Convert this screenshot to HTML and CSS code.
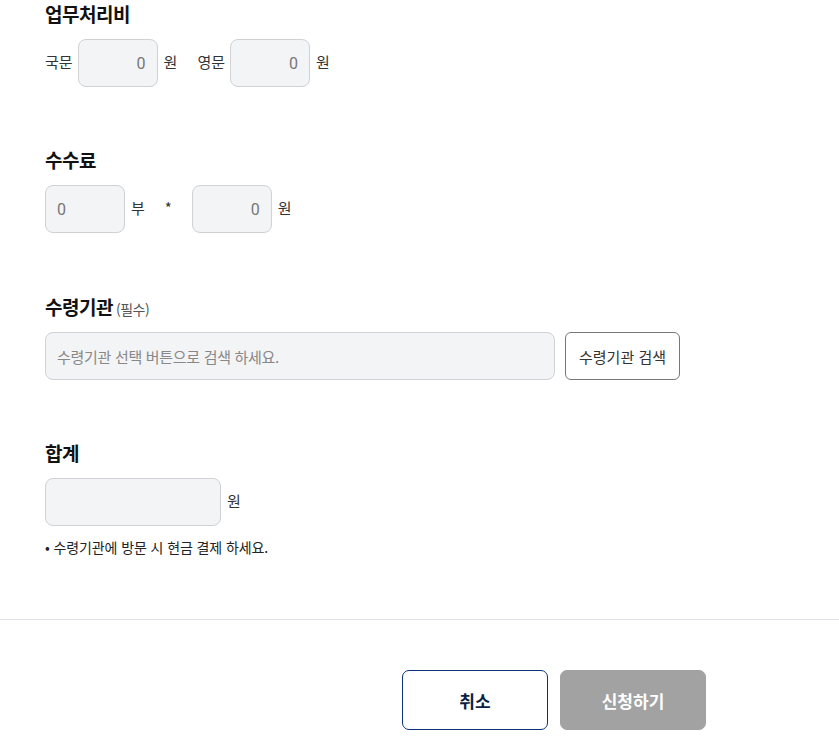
FILE: index.html
```html
<!DOCTYPE html>
<html lang="ko">
<head>
<meta charset="utf-8">
<link rel="stylesheet" href="styles.css">
</head>
<body>
<div class="form">
  <section class="sec">
    <h3 class="title">업무처리비</h3>
    <div class="row">
      <span class="lbl">국문</span>
      <input class="field right" value="0" readonly>
      <span class="unit">원</span>
      <span class="lbl grp">영문</span>
      <input class="field right" value="0" readonly>
      <span class="unit">원</span>
    </div>
  </section>

  <section class="sec">
    <h3 class="title">수수료</h3>
    <div class="row">
      <input class="field" value="0" readonly>
      <span class="unit">부</span>
      <span class="mult">*</span>
      <input class="field right" value="0" readonly>
      <span class="unit">원</span>
    </div>
  </section>

  <section class="sec third">
    <h3 class="title">수령기관<span class="req">(필수)</span></h3>
    <div class="row row-wide">
      <input class="field wide" placeholder="수령기관 선택 버튼으로 검색 하세요." readonly>
      <button class="search">수령기관 검색</button>
    </div>
  </section>

  <section class="sec last">
    <h3 class="title">합계</h3>
    <div class="row">
      <input class="field total" readonly>
      <span class="unit">원</span>
    </div>
    <p class="note">• 수령기관에 방문 시 현금 결제 하세요.</p>
  </section>
</div>
<div class="actions">
  <button class="btn cancel">취소</button>
  <button class="btn submit">신청하기</button>
</div>
</body>
</html>
```

FILE: styles.css
```css
* { box-sizing: border-box; }
html, body { margin: 0; padding: 0; background: #fff; }
body {
  font-family: "Noto Sans CJK KR", "Noto Sans", sans-serif;
  color: #222;
}
.form { padding-left: 45px; }
.sec { margin-bottom: 59px; }
.sec.third { padding-top: 1px; }
.sec.last { margin-bottom: 0; padding-bottom: 62px; }
.title {
  margin: 0 0 11px;
  height: 28px;
  font-size: 19px;
  line-height: 28px;
  font-weight: 700;
  color: #111;
  letter-spacing: -0.5px;
}
.req {
  margin-left: 3px;
  font-size: 14px;
  line-height: 1;
  font-weight: 400;
  color: #555;
  letter-spacing: -0.5px;
}
.row {
  display: flex;
  align-items: center;
  height: 48px;
}
.lbl, .unit, .mult {
  font-size: 15px;
  color: #333;
  margin-bottom: 4px;
}
.lbl { margin-right: 5px; }
.unit { margin-left: 6px; }
.grp { margin-left: 20px; }
.mult {
  margin-left: 20px;
  margin-right: 20px;
}
.field {
  width: 80px;
  height: 48px;
  border: 1px solid #cfd1d4;
  border-radius: 8px;
  background: #f3f4f6;
  font-family: "Roboto", "Noto Sans CJK KR", sans-serif;
  font-size: 16px;
  color: #777;
  padding: 0 11px;
  outline: none;
}
.field.right { text-align: right; }
.field.wide {
  width: 510px;
  font-family: "Noto Sans CJK KR", sans-serif;
  font-size: 15px;
  letter-spacing: -0.3px;
}
.field.wide::placeholder { color: #888; }
.field.total { width: 176px; }
.search {
  margin-left: 10px;
  width: 115px;
  height: 48px;
  border: 1px solid #777;
  border-radius: 6px;
  background: #fff;
  font-family: "Noto Sans CJK KR", sans-serif;
  font-size: 15px;
  color: #333;
  padding: 0;
}
.note {
  margin: 11px 0 0;
  font-size: 14px;
  line-height: 20px;
  color: #222;
  letter-spacing: -0.1px;
}
.actions {
  border-top: 1px solid #dfe2e8;
  display: flex;
  gap: 12px;
  padding: 50px 0 0 402px;
}
.btn {
  width: 146px;
  height: 60px;
  border-radius: 7px;
  font-family: "Noto Sans CJK KR", sans-serif;
  font-size: 17px;
  font-weight: 700;
  padding: 0;
}
.cancel {
  background: #fff;
  border: 1px solid #0d3173;
  color: #0b1f44;
}
.submit {
  background: #a2a2a2;
  border: 1px solid #a2a2a2;
  color: #fff;
}
```
